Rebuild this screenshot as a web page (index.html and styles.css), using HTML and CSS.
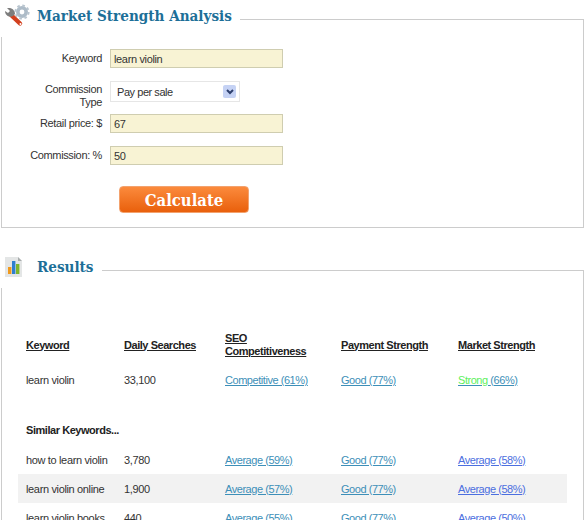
FILE: index.html
```html
<!DOCTYPE html>
<html lang="en">
<head>
    <meta charset="UTF-8">
    <title>Market Strength Analysis</title>
    <link rel="stylesheet" href="styles.css">
</head>
<body>
    <div class="heading">
        <svg class="icon" width="26" height="26" viewBox="0 0 26 26">
            <circle cx="18" cy="9" r="4.2" fill="none" stroke="#aebcc8" stroke-width="3.6"/>
            <circle cx="18" cy="9" r="6.6" fill="none" stroke="#b9c5cf" stroke-width="2" stroke-dasharray="2.6 2.6"/>
            <path d="M7 12 L16 20.5" stroke="#d2401e" stroke-width="4.4" stroke-linecap="round"/>
            <path d="M1 8 C1 12 5 15 9 13 L11 11 C11 9 10 6 6 5 L3 5 L6 8 L4 10Z" fill="#7d7d7d"/>
            <circle cx="16.5" cy="21" r="1" fill="#fff"/>
        </svg>
        <h2>Market Strength Analysis</h2>
        <div class="rule"></div>
    </div>
    <div class="panel form-panel">
        <div class="row">
            <label>Keyword</label>
            <input class="field" type="text" value="learn violin">
        </div>
        <div class="row row-select">
            <label>Commission Type</label>
            <div class="select">
                <span>Pay per sale</span>
                <span class="arrow">
                    <svg width="8" height="6" viewBox="0 0 8 6"><path d="M1 1 L4 4 L7 1" fill="none" stroke="#2d3f6e" stroke-width="2"/></svg>
                </span>
            </div>
        </div>
        <div class="row">
            <label>Retail price: $</label>
            <input class="field" type="text" value="67">
        </div>
        <div class="row">
            <label>Commission: %</label>
            <input class="field" type="text" value="50">
        </div>
        <button class="calc">Calculate</button>
    </div>

    <div class="heading results-heading">
        <svg class="icon" width="26" height="26" viewBox="0 0 26 26">
            <path d="M4 3 H17 L21 7 V23 H4Z" fill="#e4e6e6"/>
            <path d="M17 3 L21 7 H17Z" fill="#a9adad"/>
            <rect x="7" y="13" width="3.4" height="7" fill="#f09a1e"/>
            <rect x="11" y="7" width="3.4" height="13" fill="#2f7fd0"/>
            <rect x="15" y="10" width="3.4" height="10" fill="#7fb52c"/>
        </svg>
        <h2>Results</h2>
        <div class="rule"></div>
    </div>
    <div class="panel results-panel">
        <table>
            <tr class="head">
                <th class="c1"><u>Keyword</u></th>
                <th class="c2"><u>Daily Searches</u></th>
                <th class="c3"><u>SEO<br>Competitiveness</u></th>
                <th class="c4"><u>Payment Strength</u></th>
                <th class="c5"><u>Market Strength</u></th>
            </tr>
            <tr class="main">
                <td>learn violin</td>
                <td>33,100</td>
                <td><a href="#">Competitive (61%)</a></td>
                <td><a href="#">Good (77%)</a></td>
                <td><a href="#"><span class="strong">Strong </span>(66%)</a></td>
            </tr>
            <tr class="similar">
                <td colspan="5">Similar Keywords...</td>
            </tr>
            <tr>
                <td>how to learn violin</td>
                <td>3,780</td>
                <td><a href="#">Average (59%)</a></td>
                <td><a href="#">Good (77%)</a></td>
                <td><a class="avg" href="#">Average (58%)</a></td>
            </tr>
            <tr class="alt">
                <td>learn violin online</td>
                <td>1,900</td>
                <td><a href="#">Average (57%)</a></td>
                <td><a href="#">Good (77%)</a></td>
                <td><a class="avg" href="#">Average (58%)</a></td>
            </tr>
            <tr>
                <td>learn violin books</td>
                <td>440</td>
                <td><a href="#">Average (55%)</a></td>
                <td><a href="#">Good (77%)</a></td>
                <td><a class="avg" href="#">Average (50%)</a></td>
            </tr>
        </table>
    </div>
</body>
</html>
```
FILE: styles.css
```css
* {
    margin: 0;
    padding: 0;
    box-sizing: border-box;
}
html, body {
    height: 520px;
    overflow: hidden;
}
body {
    background-color: #fff;
    color: #333;
    font-family: "Liberation Sans", Arial, sans-serif;
    font-size: 11px;
    letter-spacing: -0.35px;
    width: 584px;
}
.heading {
    display: flex;
    height: 37px;
    padding-left: 1px;
}
.results-heading {
    margin-top: 23px;
}
.icon {
    margin: 3px 0 0 3px;
    flex: none;
}
.results-heading .icon {
    margin-left: 0;
}
.heading h2 {
    margin: 5px 8px 0 7px;
    color: #1d6f98;
    font-family: "DejaVu Serif Condensed", "DejaVu Serif", Georgia, serif;
    font-size: 15.1px;
    letter-spacing: 0;
    line-height: 22px;
    white-space: nowrap;
}
.results-heading h2 {
    margin-left: 10px;
}
.rule {
    flex: 1;
    margin-top: 19px;
    border-top: 1px solid #ccc;
    border-right: 1px solid #ccc;
}
.panel {
    border-left: 1px solid #ccc;
    border-right: 1px solid #ccc;
    margin-left: 1px;
}
.form-panel {
    height: 191px;
    padding-top: 12px;
    border-bottom: 1px solid #ccc;
}
.results-panel {
    height: 232px;
    padding: 39px 0 0 16px;
}
.row {
    display: flex;
    align-items: center;
    height: 19px;
    margin-bottom: 13px;
}
.row label {
    width: 75px;
    margin: 0 8px 0 25px;
    text-align: right;
    line-height: 13px;
    flex: none;
}
.row-select {
    align-items: flex-start;
    height: 21px;
    margin-bottom: 12px;
}
.row-select label {
    margin-top: 2px;
}
.field {
    width: 173px;
    height: 19px;
    padding: 0 3px;
    background-color: #f8f3d4;
    border: 1px solid #cfcdb0;
    color: #333;
    font-family: "Liberation Sans", Arial, sans-serif;
    font-size: 11px;
    letter-spacing: -0.35px;
}
.select {
    display: flex;
    align-items: center;
    justify-content: space-between;
    width: 130px;
    height: 21px;
    padding: 0 3px 0 6px;
    border: 1px solid #e6e6e6;
    letter-spacing: -0.45px;
}
.arrow {
    display: flex;
    align-items: center;
    justify-content: center;
    width: 13px;
    height: 13px;
    background-color: #c5d2f4;
    border-radius: 2px;
}
.calc {
    display: block;
    width: 130px;
    height: 27px;
    margin: 21px 0 0 117px;
    padding-top: 2px;
    background: linear-gradient(180deg, #fb8a3c, #e9600c);
    border: 1px solid #f3a26e;
    border-radius: 4px;
    color: #fff;
    font-family: "DejaVu Serif Condensed", "DejaVu Serif", Georgia, serif;
    font-size: 16.5px;
    font-weight: bold;
}
table {
    width: 549px;
    border-collapse: collapse;
    table-layout: fixed;
}
th, td {
    padding: 0 0 0 8px;
    text-align: left;
    vertical-align: middle;
}
th {
    height: 36px;
    color: #222;
    letter-spacing: -0.45px;
    line-height: 13px;
    font-weight: bold;
}
.c1 { width: 98px; }
.c2 { width: 101px; }
.c3 { width: 116px; }
.c4 { width: 117px; }
td {
    height: 29px;
}
.main td {
    height: 34px;
}
.similar td {
    height: 48px;
    padding-top: 18px;
    color: #222;
    letter-spacing: -0.45px;
    font-weight: bold;
}
.alt {
    background-color: #f2f2f2;
}
a {
    color: #3d8fb8;
    letter-spacing: -0.45px;
}
.avg {
    color: #4c6fe0;
}
.strong {
    color: #5cf05c;
}
```
